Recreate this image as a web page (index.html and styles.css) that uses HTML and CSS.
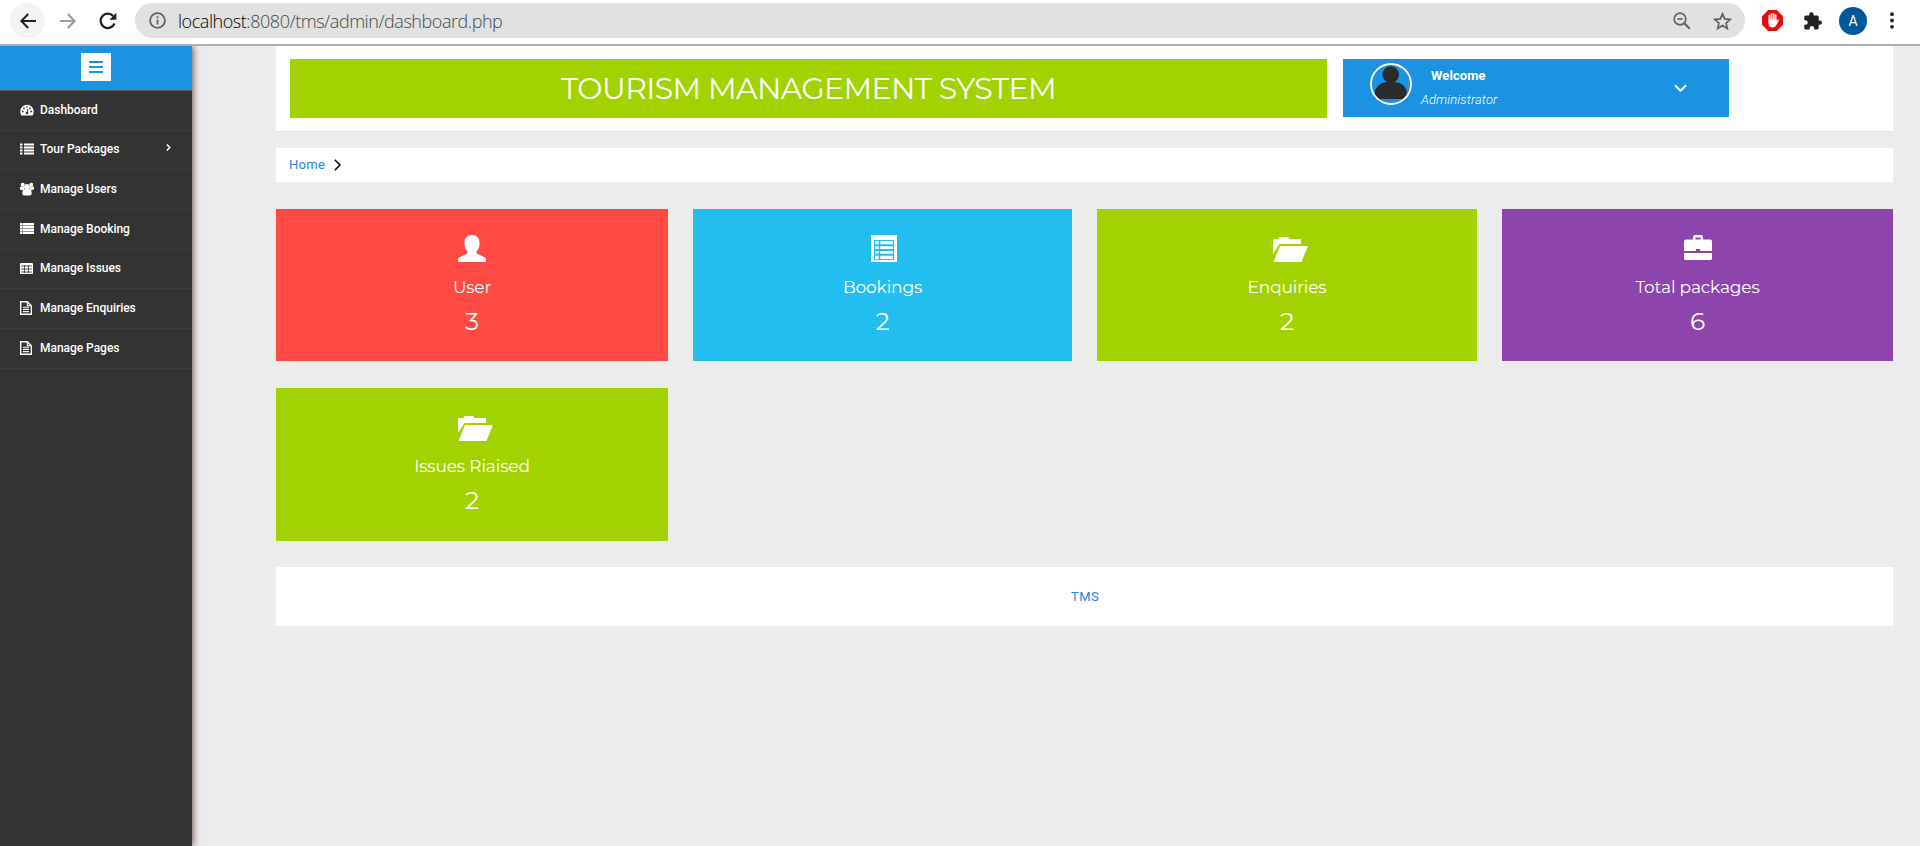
FILE: index.html
```html
<!DOCTYPE html>
<html lang="en">
<head>
<meta charset="utf-8">
<title>TMS | Admin Dashboard</title>
<link rel="stylesheet" href="styles.css">
</head>
<body>
<svg class="defs" width="0" height="0">
  <symbol id="file" viewBox="0 0 12 14"><path d="M.7.7h6.6l4 4v8.6H.7z" fill="none" stroke="#fff" stroke-width="1.4"/><path d="M7.3.7v4h4M3 6.2h6M3 8.4h6M3 10.6h6" fill="none" stroke="#fff" stroke-width="1.1"/></symbol>
  <symbol id="folder" viewBox="0 0 35 26"><path d="M0 17V3.5C0 2.700.5 2 1.500 2H5.500L6.500 0H15L16.500 2H28V7H6.500Z M7 9H35L28.500 25H.5Z" fill="#fff"/></symbol>
</svg>
<div class="toolbar">
  <span class="nav back"><svg width="16" height="16" viewBox="0 0 16 16"><path d="M16 8H1.500M8.200 1L1.400 8l6.800 7" fill="none" stroke="#202124" stroke-width="2"/></svg></span>
  <span class="nav"><svg width="16" height="16" viewBox="0 0 16 16"><path d="M0 8h14.500M7.800 1l6.800 7-6.800 7" fill="none" stroke="#9b9b9b" stroke-width="2"/></svg></span>
  <span class="nav reload"><svg width="18" height="18" viewBox="0 0 18 18"><path d="M15.500 11.500A7.200 7.200 0 1 1 14.200 4" fill="none" stroke="#202124" stroke-width="2.200"/><path d="M17.300 .8V7.800H10.300z" fill="#202124"/></svg></span>
  <div class="address">
    <svg width="17" height="17" viewBox="0 0 17 17"><circle cx="8.500" cy="8.500" r="7.400" fill="none" stroke="#5f6368" stroke-width="1.800"/><path d="M8.500 7.500v5M8.500 4.200v2" stroke="#5f6368" stroke-width="1.800"/></svg>
    <span class="url"><b>localhost</b>:8080/tms/admin/dashboard.php</span>
    <svg class="lens" width="18" height="18" viewBox="0 0 18 18"><g fill="none" stroke="#5f6368" stroke-width="1.700"><circle cx="7" cy="7" r="5.800"/><path d="M4.500 7h5"/><path d="M11.200 11.200l5.500 5.500" stroke-width="2.200"/></g></svg>
    <svg width="19" height="18" viewBox="0 0 19 18"><path d="M9.500 1.800l2.200 5.100 5.600.5-4.200 3.700 1.200 5.400-4.800-2.900-4.800 2.900 1.200-5.400-4.200-3.700 5.600-.5z" fill="none" stroke="#5f6368" stroke-width="1.700"/></svg>
  </div>
  <svg class="block" width="21" height="21" viewBox="0 0 21 21"><path d="M6.200 0h8.600L21 6.200v8.600L14.800 21H6.200L0 14.800V6.200z" fill="#e50c0c"/><path d="M7.300 11V5.500M9.400 10V3.800M11.600 10V3.800M13.700 11V5.200" stroke="#fff" stroke-width="1.700" stroke-linecap="round"/><path d="M6.500 9.500H14.500V12L16 9.200Q17.200 9 16.800 10.200L14.200 15.500Q13 17.500 10.500 17.500Q6.500 17.300 6.500 13Z" fill="#fff"/></svg>
  <svg class="puzzle" width="18" height="18" viewBox="0 0 18 18"><path d="M1.800 3.600H5.200V2.400a2.200 2.200 0 0 1 4.400 0v1.200h3.600q1.500 0 1.500 1.500v3.300h1.100a2.200 2.200 0 0 1 0 4.400h-1.100v3.300q0 1.500-1.500 1.500h-3V16.200a2.200 2.200 0 0 0-4.600 0v1.400H1.800Q.3 17.600.3 16.100V12.700h1.200a2.200 2.200 0 0 0 0-4.500H.3V5.100Q.3 3.600 1.800 3.600z" fill="#202124"/></svg>
  <span class="profile">A</span>
  <svg width="4" height="17" viewBox="0 0 4 17"><g fill="#202124"><circle cx="2" cy="2.200" r="1.900"/><circle cx="2" cy="8.500" r="1.900"/><circle cx="2" cy="14.800" r="1.900"/></g></svg>
</div>
<div class="page">
  <nav class="sidebar">
    <div class="side-top"><span class="burger"><i></i><i></i><i></i></span></div>
    <a class="item"><span class="ico"><svg width="14" height="12" viewBox="0 0 14 12"><path d="M7 .8A6.700 6.700 0 0 0 .3 7.500Q.3 10 1.500 11.500h11q1.200-1.500 1.200-4A6.700 6.700 0 0 0 7 .8z" fill="#fff"/><g fill="#333"><circle cx="2.700" cy="7.500" r=".9"/><circle cx="4" cy="4.400" r=".9"/><circle cx="7" cy="3" r=".8"/><circle cx="10" cy="4.400" r=".9"/><circle cx="11.300" cy="7.500" r=".9"/><circle cx="7" cy="9" r="1.300"/></g><path d="M7 9l1-4" stroke="#333"/></svg></span>Dashboard</a>
    <a class="item high"><span class="ico"><svg width="14" height="12" viewBox="0 0 14 12"><path d="M0 1.500h2.500M0 4.500h2.500M0 7.500h2.500M0 10.500h2.500M4 1.500h10M4 4.500h10M4 7.500h10M4 10.500h10" stroke="#fff" stroke-width="2"/></svg></span>Tour Packages<svg class="chev" width="5" height="7" viewBox="0 0 5 7"><path d="M.8.5l3 3-3 3" fill="none" stroke="#fff" stroke-width="1.400"/></svg></a>
    <a class="item mid"><span class="ico"><svg width="14" height="14" viewBox="0 0 14 14"><g fill="#fff"><circle cx="2.700" cy="2.800" r="2"/><circle cx="11.300" cy="2.800" r="2"/><path d="M0 5.500q0-1 1-1h3v3.500H1.200Q0 8 0 7zM14 5.500q0-1-1-1h-3v3.500h2.800Q14 8 14 7z"/><circle cx="7" cy="5" r="2.900"/><path d="M2.300 11.500Q2.300 7.300 4.700 7.300h4.600q2.400 0 2.400 4.200 0 2-2 2H4.300q-2 0-2-2z"/></g></svg></span>Manage Users</a>
    <a class="item"><span class="ico"><svg width="14" height="12" viewBox="0 0 14 12"><path d="M0 0h14v11H0z" fill="#fff"/><path d="M0 2.500h14M0 5.500h14M0 8.500h14M2.500 0v11" stroke="#999" stroke-width="1"/></svg></span>Manage Booking</a>
    <a class="item high"><span class="ico"><svg width="13" height="11" viewBox="0 0 13 11"><rect width="13" height="11" rx="1" fill="#fff"/><path d="M1 3h11M1 6h11M1 9h11M4.500 2v8M8.500 2v8" stroke="#333" stroke-width=".8"/><path d="M.5 1v9.500h12V1" fill="none" stroke="#fff"/></svg></span>Manage Issues</a>
    <a class="item mid"><span class="ico"><svg width="12" height="14"><use href="#file"/></svg></span>Manage Enquiries</a>
    <a class="item"><span class="ico"><svg width="12" height="14"><use href="#file"/></svg></span>Manage Pages</a>
  </nav>
  <main class="content">
    <header class="header">
      <h1 class="brand">TOURISM MANAGEMENT SYSTEM</h1>
      <div class="account">
        <svg width="42" height="42" viewBox="0 0 42 42"><path d="M6.500 36Q2 29 8 23Q11 19.500 17 19a8.300 8.300 0 1 1 7.500 0Q31 19.500 34 23q5 6 1.500 12L33.500 36z" fill="#2b2b2b"/><circle cx="21" cy="21" r="20" fill="none" stroke="#fff" stroke-width="1.900"/></svg>
        <div class="who"><strong>Welcome</strong><em>Administrator</em></div>
        <svg class="down" width="13" height="9" viewBox="0 0 13 9"><path d="M1 1.300l5.500 5.500L12 1.300" fill="none" stroke="#fff" stroke-width="2"/></svg>
      </div>
    </header>
    <div class="crumbs"><a>Home</a><svg width="7" height="12" viewBox="0 0 7 12"><path d="M.8.700L6 6 .8 11.300" fill="none" stroke="#000" stroke-width="1.500"/></svg></div>
    <section class="cards">
      <div class="card red"><svg width="28" height="28" viewBox="0 0 28 28"><path d="M14 0C19 0 21.500 3 21.500 8Q21.500 13.500 18.500 16.500V18.300L26 22Q28 23 28 25V27H0V25Q0 23 2 22L9.500 18.300V16.500Q6.500 13.500 6.500 8C6.500 3 9 0 14 0z" fill="#fff"/></svg><h3>User</h3><p>3</p></div>
      <div class="card blue"><svg class="list" width="26" height="28" viewBox="0 0 26 28"><path d="M0 0h26v27H0z" fill="#fff"/><path d="M3.500 5.500H22.500V24.500H3.500z" fill="none" stroke="#22beef" stroke-width="1.200"/><path d="M4 10.200h18M4 15h18M4 19.800h18" stroke="#22beef" stroke-width="2"/><path d="M8.500 5.500v19" stroke="#22beef" stroke-width="1.500"/></svg><h3>Bookings</h3><p>2</p></div>
      <div class="card green"><svg class="folder" width="35" height="26"><use href="#folder"/></svg><h3>Enquiries</h3><p>2</p></div>
      <div class="card purple"><svg width="28" height="28" viewBox="0 0 28 28"><path d="M2 4.500H9V2Q9 0 11 0H17Q19 0 19 2V4.500H26Q28 4.500 28 6.500V16H16V14H12V16H0V6.500Q0 4.500 2 4.500zM11.500 2.500v2h5V2.500zM0 18H28V23.500Q28 25 26 25H2Q0 25 0 23.500z" fill="#fff" fill-rule="evenodd"/></svg><h3>Total packages</h3><p>6</p></div>
      <div class="card green"><svg class="folder" width="35" height="26"><use href="#folder"/></svg><h3>Issues Riaised</h3><p>2</p></div>
    </section>
    <footer class="footer"><a>TMS</a></footer>
  </main>
</div>
</body>
</html>
```
FILE: styles.css
```css
* { box-sizing: border-box; }
body { margin: 0; height: 846px; overflow: hidden; background: #ececec; font-family: Roboto, "Liberation Sans", sans-serif; }
.defs { position: absolute; }
svg { display: block; flex: none; }
h1, h3, p { margin: 0; font-weight: 400; }

.toolbar { display: flex; align-items: center; height: 46px; padding: 0 15px 3px 10px; background: #fff; border-bottom: 2px solid #b0b0b0; }
.nav { display: grid; place-items: center; width: 35px; height: 35px; margin-right: 5px; border-radius: 50%; }
.back { background: #f3f3f3; }
.reload { margin-right: 10px; }
.address { display: flex; align-items: center; width: 1610px; height: 35px; padding: 0 13px 0 14px; border-radius: 18px; background: #e1e1e1; margin-right: 17px; }
.url { margin-left: 12px; flex: 1; font: 300 18px "Open Sans", "Noto Sans", sans-serif; letter-spacing: -.45px; color: #45484c; }
.url b { font-weight: 300; color: #000; }
.lens { margin-right: 22px; }
.puzzle { margin: 0 17px 0 21px; }
.profile { display: grid; place-items: center; width: 28px; height: 28px; margin-right: 23px; border-radius: 50%; background: #01579b; color: #fff; font-size: 14px; }

.page { display: flex; height: 800px; overflow: hidden; }
.sidebar { width: 192px; flex: none; background: #333; box-shadow: 1px 0 7px #6b5048; }
.side-top { height: 45px; padding: 7px 0 0 81px; background: #1c93e2; border-bottom: 1px solid #565656; }
.burger { display: flex; flex-direction: column; gap: 3px; width: 30px; height: 28px; padding: 8px; background: #fff; }
.burger i { height: 2px; background: #1c93e2; }
.item { display: flex; align-items: center; height: 39.700px; padding: 0 20px 0; border-bottom: 1px solid #3d3d3d; color: #fff; font-size: 12px; font-weight: 500; letter-spacing: -.03px; }
.high { padding-bottom: 2px; }
.mid { padding-bottom: 1px; }
.ico { width: 20px; }
.chev { margin: -3px 1px 0 auto; }

.content { flex: 1; padding: 0 27px 0 84px; }
.header { display: flex; align-items: flex-start; height: 86px; padding: 13px 14px; gap: 16px; background: #fff; border-bottom: 1px solid #e0e0e0; }
.brand { width: 1037px; height: 59px; background: #a2d200; color: #fff; text-align: center; font: 400 30px/59px Montserrat, Inter, sans-serif; letter-spacing: -.58px; }
.account { display: flex; width: 386px; height: 58px; padding: 4px 42px 0 27px; background: #1c93e2; color: #fff; }
.who { display: flex; flex-direction: column; width: 79px; margin-left: 9px; font-size: 13px; }
.who strong { margin: 5px 0 0 10px; font-weight: 700; line-height: 15px; letter-spacing: .1px; }
.who em { margin-top: 9px; font-weight: 300; line-height: 15px; letter-spacing: .1px; }
.down { margin: 21px 0 0 auto; }
.crumbs { display: flex; align-items: center; gap: 9px; height: 34px; margin-top: 16px; padding: 0 13px 1px; background: #fff; font-size: 13px; letter-spacing: .3px; }
.footer a, .crumbs a { color: #1c86e2; }
.cards { display: grid; grid-template-columns: 392px 379px 380px 391px; grid-template-rows: 152px 153px; column-gap: 25px; row-gap: 27px; margin-top: 27px; }
.card { display: flex; flex-direction: column; align-items: center; padding-top: 26px; color: #fff; font-family: Montserrat, Inter, sans-serif; }
.card .list { margin-left: 2px; }
.card .folder { margin: 2px 0 0 7px; }
.card h3 { margin-top: 13px; font-size: 17px; line-height: 22px; letter-spacing: -.15px; }
.card p { margin-top: 8px; font-size: 25px; line-height: 30px; }
.red { background: #ff4a43; }
.blue { background: #22beef; }
.green { background: #a2d200; }
.purple { background: #8e44ad; }
.footer { display: grid; place-items: center; height: 59px; margin-top: 26px; padding-left: 1px; background: #fff; font-size: 13px; letter-spacing: .4px; }
```
